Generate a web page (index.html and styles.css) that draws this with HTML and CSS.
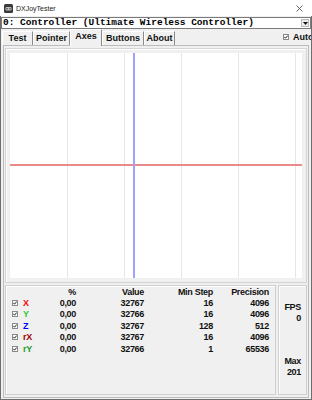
FILE: index.html
```html
<!DOCTYPE html>
<html lang="en">
<head>
    <meta charset="UTF-8">
    <meta name="viewport" content="width=device-width, initial-scale=1.0">
    <title>DXJoyTester</title>
    <link rel="stylesheet" href="styles.css">
</head>
<body>

<div class="titlebar">
    <svg class="app-icon" width="9" height="9" viewBox="0 0 9 9">
        <rect x="0" y="0" width="9" height="9" rx="1.5" fill="#3a3a3a"/>
        <rect x="1.5" y="3" width="6" height="3.5" rx="1.2" fill="#c4c4c4"/>
        <circle cx="3" cy="4.7" r="0.8" fill="#3a3a3a"/>
        <circle cx="6" cy="4.7" r="0.8" fill="#3a3a3a"/>
    </svg>
    <span class="title">DXJoyTester</span>
    <svg class="close" width="7" height="7" viewBox="0 0 7 7">
        <path d="M0.5 0.5L6.5 6.5M6.5 0.5L0.5 6.5" stroke="#555" stroke-width="0.9"/>
    </svg>
</div>

<div class="client">
    <div class="combo">
        <span class="combo-text">0: Controller (Ultimate Wireless Controller)</span>
        <span class="combo-btn">
            <svg width="5" height="3" viewBox="0 0 5 3"><path d="M0 0H5L2.5 3Z" fill="#111"/></svg>
        </span>
    </div>

    <div class="tabbar">
        <div class="tab tab-test">Test</div>
        <div class="tab tab-pointer">Pointer</div>
        <div class="tab tab-axes active">Axes</div>
        <div class="tab tab-buttons">Buttons</div>
        <div class="tab tab-about">About</div>
        <div class="auto">
            <span class="check"><svg width="4" height="4" viewBox="0 0 4 4"><path d="M0.3 1.8L1.5 3.2L3.8 0.5" stroke="#222" stroke-width="1" fill="none"/></svg></span>
            <span>Auto</span>
        </div>
    </div>

    <div class="panel">
        <div class="plot-frame">
            <svg class="plot" width="292" height="225" viewBox="0 0 292 225">
                <rect width="292" height="225" fill="#fff"/>
                <g stroke="#e6e6e6" stroke-width="1">
                    <line x1="57.5" y1="0" x2="57.5" y2="225"/>
                    <line x1="114.5" y1="0" x2="114.5" y2="225"/>
                    <line x1="171.5" y1="0" x2="171.5" y2="225"/>
                    <line x1="228.5" y1="0" x2="228.5" y2="225"/>
                    <line x1="285.5" y1="0" x2="285.5" y2="225"/>
                </g>
                <rect x="0" y="111" width="292" height="2" fill="#ea8a8a"/>
                <rect x="123" y="0" width="2" height="225" fill="#a0a0ff"/>
            </svg>
        </div>

        <div class="stats">
            <div class="axes-box">
                <div class="axes-grid">
                    <span></span><span></span>
                    <span class="num">%</span>
                    <span class="num">Value</span>
                    <span class="num">Min Step</span>
                    <span class="num">Precision</span>

                    <span class="cb"><span class="check"><svg width="4" height="4" viewBox="0 0 4 4"><path d="M0.3 1.8L1.5 3.2L3.8 0.5" stroke="#222" stroke-width="1" fill="none"/></svg></span></span>
                    <span class="ax-x">X</span>
                    <span class="num">0,00</span><span class="num">32767</span><span class="num">16</span><span class="num">4096</span>

                    <span class="cb"><span class="check"><svg width="4" height="4" viewBox="0 0 4 4"><path d="M0.3 1.8L1.5 3.2L3.8 0.5" stroke="#222" stroke-width="1" fill="none"/></svg></span></span>
                    <span class="ax-y">Y</span>
                    <span class="num">0,00</span><span class="num">32766</span><span class="num">16</span><span class="num">4096</span>

                    <span class="cb"><span class="check"><svg width="4" height="4" viewBox="0 0 4 4"><path d="M0.3 1.8L1.5 3.2L3.8 0.5" stroke="#222" stroke-width="1" fill="none"/></svg></span></span>
                    <span class="ax-z">Z</span>
                    <span class="num">0,00</span><span class="num">32767</span><span class="num">128</span><span class="num">512</span>

                    <span class="cb"><span class="check"><svg width="4" height="4" viewBox="0 0 4 4"><path d="M0.3 1.8L1.5 3.2L3.8 0.5" stroke="#222" stroke-width="1" fill="none"/></svg></span></span>
                    <span class="ax-rx">rX</span>
                    <span class="num">0,00</span><span class="num">32767</span><span class="num">16</span><span class="num">4096</span>

                    <span class="cb"><span class="check"><svg width="4" height="4" viewBox="0 0 4 4"><path d="M0.3 1.8L1.5 3.2L3.8 0.5" stroke="#222" stroke-width="1" fill="none"/></svg></span></span>
                    <span class="ax-ry">rY</span>
                    <span class="num">0,00</span><span class="num">32766</span><span class="num">1</span><span class="num">65536</span>
                </div>
            </div>
            <div class="fps-box">
                <div class="fps-label">FPS</div>
                <div>0</div>
                <div class="max-label">Max</div>
                <div>201</div>
            </div>
        </div>
    </div>
</div>

</body>
</html>
```

FILE: styles.css
```css
body {
    margin: 0;
    width: 312px;
    height: 400px;
    overflow: hidden;
    background: #fff;
    font-family: "Liberation Sans", Arial, sans-serif;
    color: #111;
}
.titlebar {
    height: 16px;
    display: flex;
    align-items: center;
    background: #fff;
}
.app-icon {
    margin-left: 4px;
}
.title {
    margin-left: 3px;
    font-size: 7px;
    color: #222;
}
.close {
    margin-left: auto;
    margin-right: 9px;
}
.client {
    height: 384px;
    box-sizing: border-box;
    border: 1px solid #6e6e6e;
    border-top: none;
    background: #f0f0f0;
    overflow: hidden;
}
.combo {
    margin: 1px 0 0 0;
    height: 12px;
    box-sizing: border-box;
    border: 1px solid #7a7a7a;
    background: #fff;
    display: flex;
    align-items: center;
}
.combo-text {
    padding-left: 1px;
    font-family: "Liberation Mono", "Courier New", monospace;
    font-weight: bold;
    font-size: 9.5px;
    line-height: 10px;
    color: #000;
    white-space: nowrap;
}
.combo-btn {
    margin-left: auto;
    margin-right: 1px;
    width: 8px;
    height: 8px;
    box-sizing: border-box;
    border: 1px solid #b8b8b8;
    background: #ececec;
    display: flex;
    align-items: center;
    justify-content: center;
}
.tabbar {
    margin-top: 2px;
    height: 14px;
    display: flex;
    padding-left: 1px;
    font-size: 9px;
    font-weight: bold;
}
.tab {
    box-sizing: border-box;
    height: 14px;
    line-height: 13px;
    text-align: center;
    border-top: 1px solid #fff;
    border-left: 1px solid #fff;
    border-right: 1px solid #8a8a8a;
    white-space: nowrap;
}
.tab-test { width: 31px; }
.tab-pointer { width: 37px; }
.tab-axes { width: 32px; }
.tab-buttons { width: 42px; }
.tab-about { width: 31px; }
.tab.active {
    position: relative;
    z-index: 1;
    height: 17px;
    margin-top: -2px;
    margin-bottom: -1px;
    line-height: 12px;
    background: #f0f0f0;
}
.auto {
    margin-left: auto;
    width: 28px;
    flex-shrink: 0;
    display: flex;
    align-items: center;
    gap: 4px;
    white-space: nowrap;
    height: 12px;
}
.check {
    width: 6px;
    height: 6px;
    box-sizing: border-box;
    border: 1px solid #8a8a8a;
    background: #fff;
    display: flex;
    align-items: center;
    justify-content: center;
    flex-shrink: 0;
}
.panel {
    margin: 0 2px;
    height: 353px;
    box-sizing: border-box;
    border: 1px solid #bcbcbc;
    background: #f0f0f0;
}
.plot-frame {
    margin: 2px 0 0 1px;
    width: 302px;
    box-sizing: border-box;
    border: 1px solid #d4d4d4;
    padding: 4px;
    box-shadow: inset 1px 1px 0 #fff;
}
.plot {
    display: block;
}
.stats {
    margin: 2px 0 0 1px;
    height: 110px;
    display: flex;
    gap: 2px;
    font-size: 9px;
    letter-spacing: -0.3px;
    font-weight: bold;
}
.axes-box,
.fps-box {
    box-sizing: border-box;
    border: 1px solid #cfcfcf;
    box-shadow: inset 1px 1px 0 #fff;
}
.axes-box {
    width: 271px;
    padding: 1px 0 0 6px;
}
.axes-grid {
    display: grid;
    grid-template-columns: 11px 20px 33px 68px 69px 56px;
    grid-template-rows: 10px;
    grid-auto-rows: 11.5px;
    align-items: center;
}
.num {
    text-align: right;
}
.cb {
    display: flex;
    align-items: center;
}
.ax-x { color: #ff0000; }
.ax-y { color: #2ccc2c; }
.ax-z { color: #0000ff; }
.ax-rx { color: #a00000; }
.ax-ry { color: #1e9b1e; }
.fps-box {
    width: 29px;
    padding: 16px 5px 0 0;
    text-align: right;
    line-height: 11px;
}
.max-label {
    margin-top: 32px;
}
```
